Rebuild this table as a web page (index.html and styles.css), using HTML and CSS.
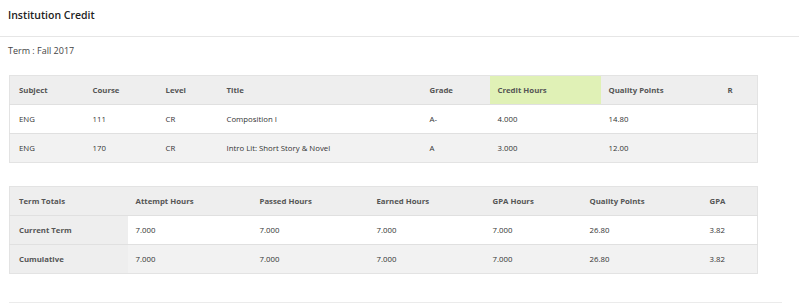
FILE: index.html
```html
<!DOCTYPE html>
<html>
<head>
<meta charset="utf-8">
<link rel="stylesheet" href="styles.css">
</head>
<body>
<div class="panel-head"><h1 class="title">Institution Credit</h1></div>
<div class="content">
  <div class="term">Term : Fall 2017</div>
  <table class="grid courses">
    <colgroup>
      <col class="c-subj"><col class="c-course"><col class="c-level"><col class="c-title"><col class="c-grade"><col class="c-credit"><col class="c-qp"><col class="c-r">
    </colgroup>
    <thead>
      <tr><th>Subject</th><th>Course</th><th>Level</th><th>Title</th><th>Grade</th><th class="hl">Credit Hours</th><th>Quality Points</th><th>R</th></tr>
    </thead>
    <tbody>
      <tr class="white"><td>ENG</td><td>111</td><td>CR</td><td>Composition I</td><td>A-</td><td>4.000</td><td>14.80</td><td></td></tr>
      <tr class="gray"><td>ENG</td><td>170</td><td>CR</td><td>Intro Lit: Short Story &amp; Novel</td><td>A</td><td>3.000</td><td>12.00</td><td></td></tr>
    </tbody>
  </table>
  <table class="grid totals">
    <colgroup>
      <col class="t-label"><col class="t-att"><col class="t-pass"><col class="t-earn"><col class="t-gpah"><col class="t-qp"><col class="t-gpa">
    </colgroup>
    <thead>
      <tr><th class="first">Term Totals</th><th>Attempt Hours</th><th>Passed Hours</th><th>Earned Hours</th><th>GPA Hours</th><th>Quality Points</th><th>GPA</th></tr>
    </thead>
    <tbody>
      <tr class="white"><th class="first">Current Term</th><td>7.000</td><td>7.000</td><td>7.000</td><td>7.000</td><td>26.80</td><td>3.82</td></tr>
      <tr class="gray"><th class="first">Cumulative</th><td>7.000</td><td>7.000</td><td>7.000</td><td>7.000</td><td>26.80</td><td>3.82</td></tr>
    </tbody>
  </table>
  <div class="foot-line"></div>
</div>
</body>
</html>
```
FILE: styles.css
```css
html, body {
  margin: 0;
  padding: 0;
  background: #fff;
  font-family: "Open Sans", "DejaVu Sans", sans-serif;
  color: #333;
}
.panel-head {
  height: 36px;
  border-bottom: 1px solid #e6e6e6;
  display: flex;
  align-items: center;
  padding-left: 8px;
}
.title {
  margin: 0;
  font-size: 10.5px;
  font-weight: 600;
  color: #222;
  line-height: 14px;
  position: relative;
  top: -3px;
}
.content {
  padding-left: 9px;
}
.term {
  font-size: 9px;
  line-height: 12px;
  color: #444;
  margin: 8px 0 0 -1px;
  height: 12px;
}
.grid {
  border-collapse: collapse;
  table-layout: fixed;
  width: 748px;
  font-size: 7.8px;
  line-height: 10px;
  border: 1px solid #e3e3e3;
}
.courses { margin-top: 18px; }
.totals { margin-top: 23px; }
.grid tr { height: 29px; }
.grid th, .grid td {
  text-align: left;
  padding: 0 0 0 8px;
  border-top: 1px solid #e0e0e0;
  white-space: nowrap;
  vertical-align: middle;
}
.grid th {
  font-weight: 700;
  color: #555;
}
.grid thead tr { background: #eeeeee; }
.grid thead th { border-top: none; }
.grid td { color: #333; }
.grid th.first { padding-left: 9px; background: #eeeeee; }
.courses td:first-child, .courses th:first-child { padding-left: 9px; }
.white { background: #fff; }
.gray { background: #f2f2f2; }
.hl { background: #e0f1b6; }

.c-subj { width: 75px; }
.c-course { width: 73px; }
.c-level { width: 61px; }
.c-title { width: 203px; }
.c-grade { width: 68px; }
.c-credit { width: 111px; }
.c-qp { width: 119px; }
.c-r { width: 38px; }

.t-label { width: 118px; }
.t-att { width: 124px; }
.t-pass { width: 117px; }
.t-earn { width: 116px; }
.t-gpah { width: 97px; }
.t-qp { width: 120px; }
.t-gpa { width: 56px; }

.foot-line {
  margin-top: 28px;
  width: 773px;
  height: 1px;
  background: #ebebeb;
}
```
